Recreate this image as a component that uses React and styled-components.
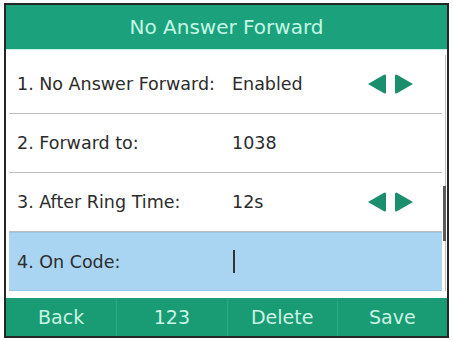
import React from 'react';
import styled, { createGlobalStyle } from 'styled-components';

const GlobalStyle = createGlobalStyle`
  html, body {
    margin: 0;
    padding: 0;
    background: #ffffff;
  }
  body {
    font-family: "DejaVu Sans", Verdana, sans-serif;
  }
`;

const rows = [
  { label: '1. No Answer Forward:', value: 'Enabled', arrows: true },
  { label: '2. Forward to:', value: '1038' },
  { label: '3. After Ring Time:', value: '12s', arrows: true },
  { label: '4. On Code:', value: '', editing: true },
];

const softKeys = ['Back', '123', 'Delete', 'Save'];

const App = () => {
  return (
    <>
      <GlobalStyle />
      <Screen>
        <TitleBar>No Answer Forward</TitleBar>
        <Body>
          <List>
            {rows.map((r) => (
              <Row key={r.label} $active={r.editing}>
                <Label>{r.label}</Label>
                <Value>
                  {r.value}
                  {r.editing && <Caret />}
                </Value>
                {r.arrows && (
                  <Arrows>
                    <svg width="47" height="22" viewBox="0 0 47 22">
                      <path d="M1 11 L17 1.8 Q19 0.7 19 3 L19 19 Q19 21.3 17 20.2 Z" fill="#1b8f6d" />
                      <path d="M46 11 L30 1.8 Q28 0.7 28 3 L28 19 Q28 21.3 30 20.2 Z" fill="#1b8f6d" />
                    </svg>
                  </Arrows>
                )}
              </Row>
            ))}
          </List>
          <ScrollTrack>
            <ScrollThumb />
          </ScrollTrack>
        </Body>
        <SoftKeys>
          {softKeys.map((k) => (
            <SoftKey key={k}>{k}</SoftKey>
          ))}
        </SoftKeys>
      </Screen>
    </>
  );
};

export default App;

const Screen = styled.div`
  margin: 3px 4px;
  width: 441px;
  height: 331px;
  border: 2px solid #262626;
  display: flex;
  flex-direction: column;
  background: #ffffff;
  overflow: hidden;
`;

const TitleBar = styled.div`
  height: 44px;
  flex-shrink: 0;
  background: #1ba27d;
  color: #c4f7e4;
  font-size: 20px;
  display: flex;
  align-items: center;
  justify-content: center;
  border-bottom: 1px solid #c9efe2;
`;

const Body = styled.div`
  flex: 1;
  display: flex;
  padding: 5px 0 7px 3px;
`;

const List = styled.div`
  flex: 1;
  display: flex;
  flex-direction: column;
`;

const Row = styled.div`
  height: 59px;
  display: flex;
  align-items: center;
  padding-left: 8px;
  box-sizing: border-box;
  color: #2c2c2c;
  font-size: 17.5px;
  background: ${(p) => (p.$active ? '#a9d5f2' : 'transparent')};
  border-bottom: 1px solid ${(p) => (p.$active ? '#9cc7e3' : '#bdbdbd')};
  border-top: ${(p) => (p.$active ? '1px solid #9cc7e3' : 'none')};
`;

const Label = styled.span`
  width: 215px;
  flex-shrink: 0;
  white-space: nowrap;
`;

const Value = styled.span`
  flex: 1;
  display: flex;
  align-items: center;
`;

const Caret = styled.span`
  display: inline-block;
  width: 2px;
  height: 23px;
  background: #333333;
  margin-left: 1px;
`;

const Arrows = styled.div`
  width: 75px;
  display: flex;
  align-items: center;
`;

const ScrollTrack = styled.div`
  width: 4px;
  margin-left: 1px;
  position: relative;
  display: flex;
  justify-content: center;
  &::before {
    content: '';
    width: 1px;
    height: 100%;
    background: #bcbcbc;
  }
`;

const ScrollThumb = styled.div`
  position: absolute;
  left: 0;
  top: 131px;
  width: 3px;
  height: 55px;
  background: #5a5a5a;
`;

const SoftKeys = styled.div`
  height: 38px;
  flex-shrink: 0;
  background: #199b74;
  display: grid;
  grid-template-columns: repeat(4, 1fr);
`;

const SoftKey = styled.div`
  display: flex;
  align-items: center;
  justify-content: center;
  color: #c9f3e2;
  font-size: 19px;
  & + & {
    border-left: 1px solid #2aa982;
  }
`;
